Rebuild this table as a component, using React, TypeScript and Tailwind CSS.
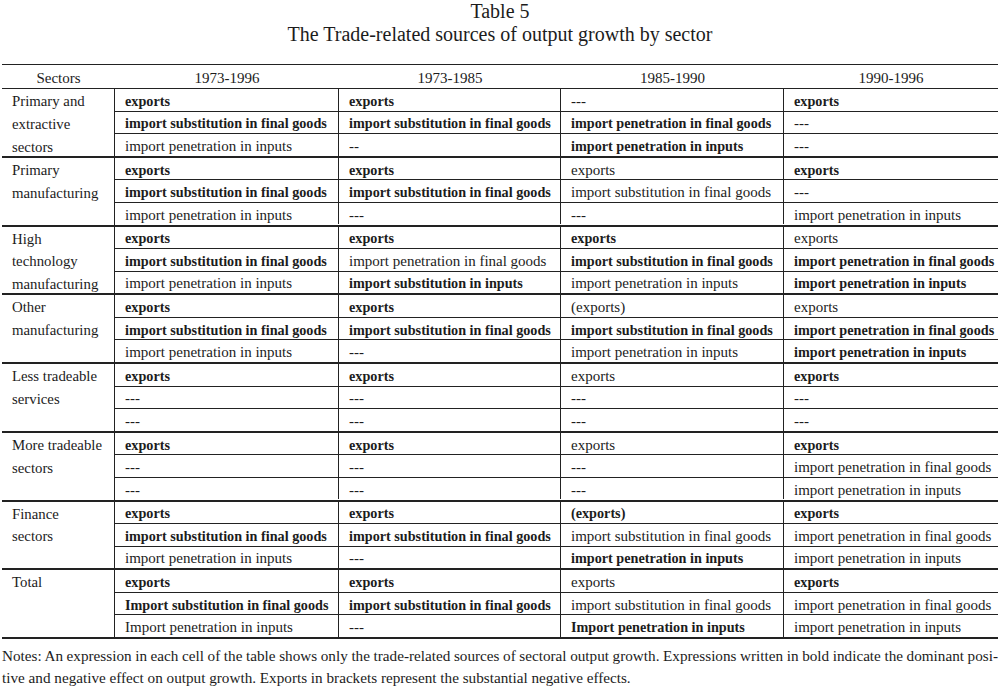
import React from 'react';

type Cell = [string, boolean];
const B = (t: string): Cell => [t, true];
const R = (t: string): Cell => [t, false];

const ISFG = 'import substitution in final goods';
const IPFG = 'import penetration in final goods';
const IPI = 'import penetration in inputs';
const NA = '---';

// each sector: name lines, then 4 periods x 3 entries
const SECTORS: { name: string[]; cols: Cell[][] }[] = [
  {
    name: ['Primary and', 'extractive', 'sectors'],
    cols: [
      [B('exports'), B(ISFG), R(IPI)],
      [B('exports'), B(ISFG), R('--')],
      [R(NA), B(IPFG), B(IPI)],
      [B('exports'), R(NA), R(NA)],
    ],
  },
  {
    name: ['Primary', 'manufacturing'],
    cols: [
      [B('exports'), B(ISFG), R(IPI)],
      [B('exports'), B(ISFG), R(NA)],
      [R('exports'), R(ISFG), R(NA)],
      [B('exports'), R(NA), R(IPI)],
    ],
  },
  {
    name: ['High', 'technology', 'manufacturing'],
    cols: [
      [B('exports'), B(ISFG), R(IPI)],
      [B('exports'), R(IPFG), B('import substitution in inputs')],
      [B('exports'), B(ISFG), R(IPI)],
      [R('exports'), B(IPFG), B(IPI)],
    ],
  },
  {
    name: ['Other', 'manufacturing'],
    cols: [
      [B('exports'), B(ISFG), R(IPI)],
      [B('exports'), B(ISFG), R(NA)],
      [R('(exports)'), B(ISFG), R(IPI)],
      [R('exports'), B(IPFG), B(IPI)],
    ],
  },
  {
    name: ['Less tradeable', 'services'],
    cols: [
      [B('exports'), R(NA), R(NA)],
      [B('exports'), R(NA), R(NA)],
      [R('exports'), R(NA), R(NA)],
      [B('exports'), R(NA), R(NA)],
    ],
  },
  {
    name: ['More tradeable', 'sectors'],
    cols: [
      [B('exports'), R(NA), R(NA)],
      [B('exports'), R(NA), R(NA)],
      [R('exports'), R(NA), R(NA)],
      [B('exports'), R(IPFG), R(IPI)],
    ],
  },
  {
    name: ['Finance', 'sectors'],
    cols: [
      [B('exports'), B(ISFG), R(IPI)],
      [B('exports'), B(ISFG), R(NA)],
      [B('(exports)'), R(ISFG), B(IPI)],
      [B('exports'), R(IPFG), R(IPI)],
    ],
  },
  {
    name: ['Total'],
    cols: [
      [B('exports'), B('Import substitution in final goods'), R('Import penetration in inputs')],
      [B('exports'), B(ISFG), R(NA)],
      [R('exports'), R(ISFG), B('Import penetration in inputs')],
      [B('exports'), R(IPFG), R(IPI)],
    ],
  },
];

const PERIODS = ['1973-1996', '1973-1985', '1985-1990', '1990-1996'];
const COL_W = ['w-[224px]', 'w-[222px]', 'w-[223px]', 'w-[214px]'];

export default function App() {
  return (
    <div className="w-[1000px] h-[688px] bg-white text-[#1c1c1c] font-['Liberation_Serif',serif] overflow-hidden">
      <div className="h-[64px] text-center text-[20px] leading-[23px]">
        <div>Table 5</div>
        <div>The Trade-related sources of output growth by sector</div>
      </div>

      <div className="ml-[2px] w-[996px] border-t border-[#222]">
        {/* header */}
        <div className="flex h-[24px] leading-[26px] text-[15px] border-b border-[#222]">
          <div className="w-[113px] text-center">Sectors</div>
          {PERIODS.map((p, i) => (
            <div key={p} className={COL_W[i] + ' text-center'}>
              {p}
            </div>
          ))}
        </div>

        {SECTORS.map((s) => (
          <div key={s.name.join(' ')} className="flex h-[68.75px] border-b-2 border-[#222]">
            <div className="w-[113px] border-r border-[#222] pl-[10px] leading-[22.9px] pt-[1px] text-[14.8px]">
              {s.name.map((n) => (
                <div key={n}>{n}</div>
              ))}
            </div>
            <div className="flex flex-col flex-1">
              {[0, 1, 2].map((r) => (
                <div
                  key={r}
                  className={'flex flex-1 min-h-0 ' + (r < 2 ? 'border-b border-[#222]' : '')}
                >
                  {s.cols.map((c, i) => (
                    <div
                      key={i}
                      className={
                        COL_W[i] +
                        (i < 3 ? ' border-r' : '') +
                        ' border-[#222] pl-[10px] flex items-center pt-[2px] leading-[16px] whitespace-nowrap ' +
                        (c[r][1] ? 'font-bold text-[14.2px]' : 'text-[15px]')
                      }
                    >
                      {c[r][0]}
                    </div>
                  ))}
                </div>
              ))}
            </div>
          </div>
        ))}
      </div>

      <div className="pl-[2px] pt-[6px] text-[15.2px] leading-[22px] w-[998px]">
        <div className="text-justify [text-align-last:justify] [word-spacing:-2px]">
          Notes: An expression in each cell of the table shows only the trade-related sources of sectoral output
          growth. Expressions written in bold indicate the dominant posi-
        </div>
        <div>
          tive and negative effect on output growth. Exports in brackets represent the substantial negative effects.
        </div>
      </div>
    </div>
  );
}
